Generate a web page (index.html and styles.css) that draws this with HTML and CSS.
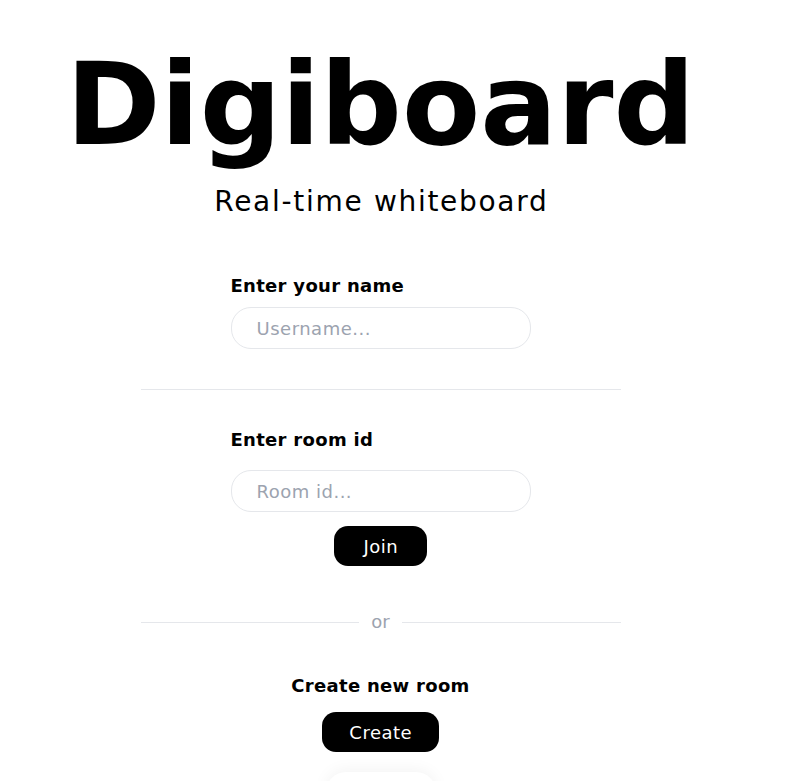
FILE: index.html
```html
<!DOCTYPE html>
<html lang="en">
<head>
<meta charset="utf-8">
<title>Digiboard</title>
<link rel="stylesheet" href="styles.css">
</head>
<body>
<main class="page">
  <header class="hero">
    <h1 class="title">Digiboard</h1>
    <p class="subtitle">Real-time whiteboard</p>
  </header>

  <section class="form-block form-block-first">
    <label class="label" for="username">Enter your name</label>
    <input class="field" id="username" type="text" placeholder="Username...">
  </section>

  <hr class="rule rule-plain">

  <section class="form-block">
    <label class="label label-room" for="roomid">Enter room id</label>
    <input class="field" id="roomid" type="text" placeholder="Room id...">
    <button class="btn btn-join" type="button">Join</button>
  </section>

  <div class="or-divider">
    <span class="or-line"></span>
    <span class="or-text">or</span>
    <span class="or-line"></span>
  </div>

  <section class="create-block">
    <h2 class="create-title">Create new room</h2>
    <button class="btn btn-create" type="button">Create</button>
    <div class="ghost"></div>
  </section>
</main>
</body>
</html>
```

FILE: styles.css
```css
* { box-sizing: border-box; }

html, body {
  margin: 0;
  padding: 0;
  background: #ffffff;
}

body {
  font-family: "DejaVu Sans", "Inter", sans-serif;
  color: #000;
  overflow: hidden;
}

.page {
  width: 761px;
  display: flex;
  flex-direction: column;
  align-items: center;
}

.hero {
  display: flex;
  flex-direction: column;
  align-items: center;
}

.title {
  margin: 35px 0 0 0;
  font-size: 114px;
  font-weight: 700;
  line-height: 140px;
  letter-spacing: 0;
}

.subtitle {
  margin: 9px 0 0 0;
  padding-left: 1.7px;
  font-size: 28px;
  font-weight: 400;
  line-height: 36px;
  letter-spacing: 1.7px;
}

.form-block {
  width: 300px;
  display: flex;
  flex-direction: column;
  align-items: stretch;
}

.form-block-first { margin-top: 54px; }

.label {
  font-size: 18px;
  font-weight: 700;
  line-height: 24px;
  letter-spacing: 0.3px;
  margin-bottom: 9px;
}

.label-room { margin-bottom: 18px; }

.field {
  width: 300px;
  height: 42px;
  border: 1px solid #e5e7eb;
  border-radius: 20px;
  padding: 0 0 0 25px;
  font-family: inherit;
  font-size: 18px;
  letter-spacing: 0.5px;
  color: #111;
  background: #fff;
  outline: none;
}

.field::placeholder { color: #9ca3af; }

.rule {
  border: 0;
  height: 1px;
  background: #e5e7eb;
  margin: 0;
}

.rule-plain {
  width: 480px;
  margin: 40px 0 38px 0;
}

.btn {
  align-self: center;
  border: 0;
  background: #000;
  color: #fff;
  font-family: inherit;
  font-size: 18px;
  font-weight: 400;
  letter-spacing: 0.5px;
  padding: 0 0 0 0.5px;
  height: 40px;
  border-radius: 14px;
  cursor: pointer;
}

.btn-join {
  width: 93px;
  margin-top: 14px;
}

.or-divider {
  width: 480px;
  display: flex;
  align-items: center;
  gap: 12px;
  margin-top: 44px;
}

.or-line {
  flex: 1;
  height: 1px;
  background: #e5e7eb;
}

.or-text {
  color: #9ca3af;
  font-size: 18px;
  line-height: 24px;
}

.create-block {
  display: flex;
  flex-direction: column;
  align-items: center;
  margin-top: 40px;
}

.create-title {
  margin: 0;
  font-size: 18px;
  font-weight: 700;
  line-height: 24px;
  letter-spacing: 0.3px;
}

.btn-create {
  width: 117px;
  margin-top: 14px;
}

.ghost {
  width: 110px;
  height: 40px;
  margin-top: 20px;
  border-radius: 20px;
  background: #fff;
  box-shadow: 0 -2px 16px rgba(0, 0, 0, 0.05);
}
```
